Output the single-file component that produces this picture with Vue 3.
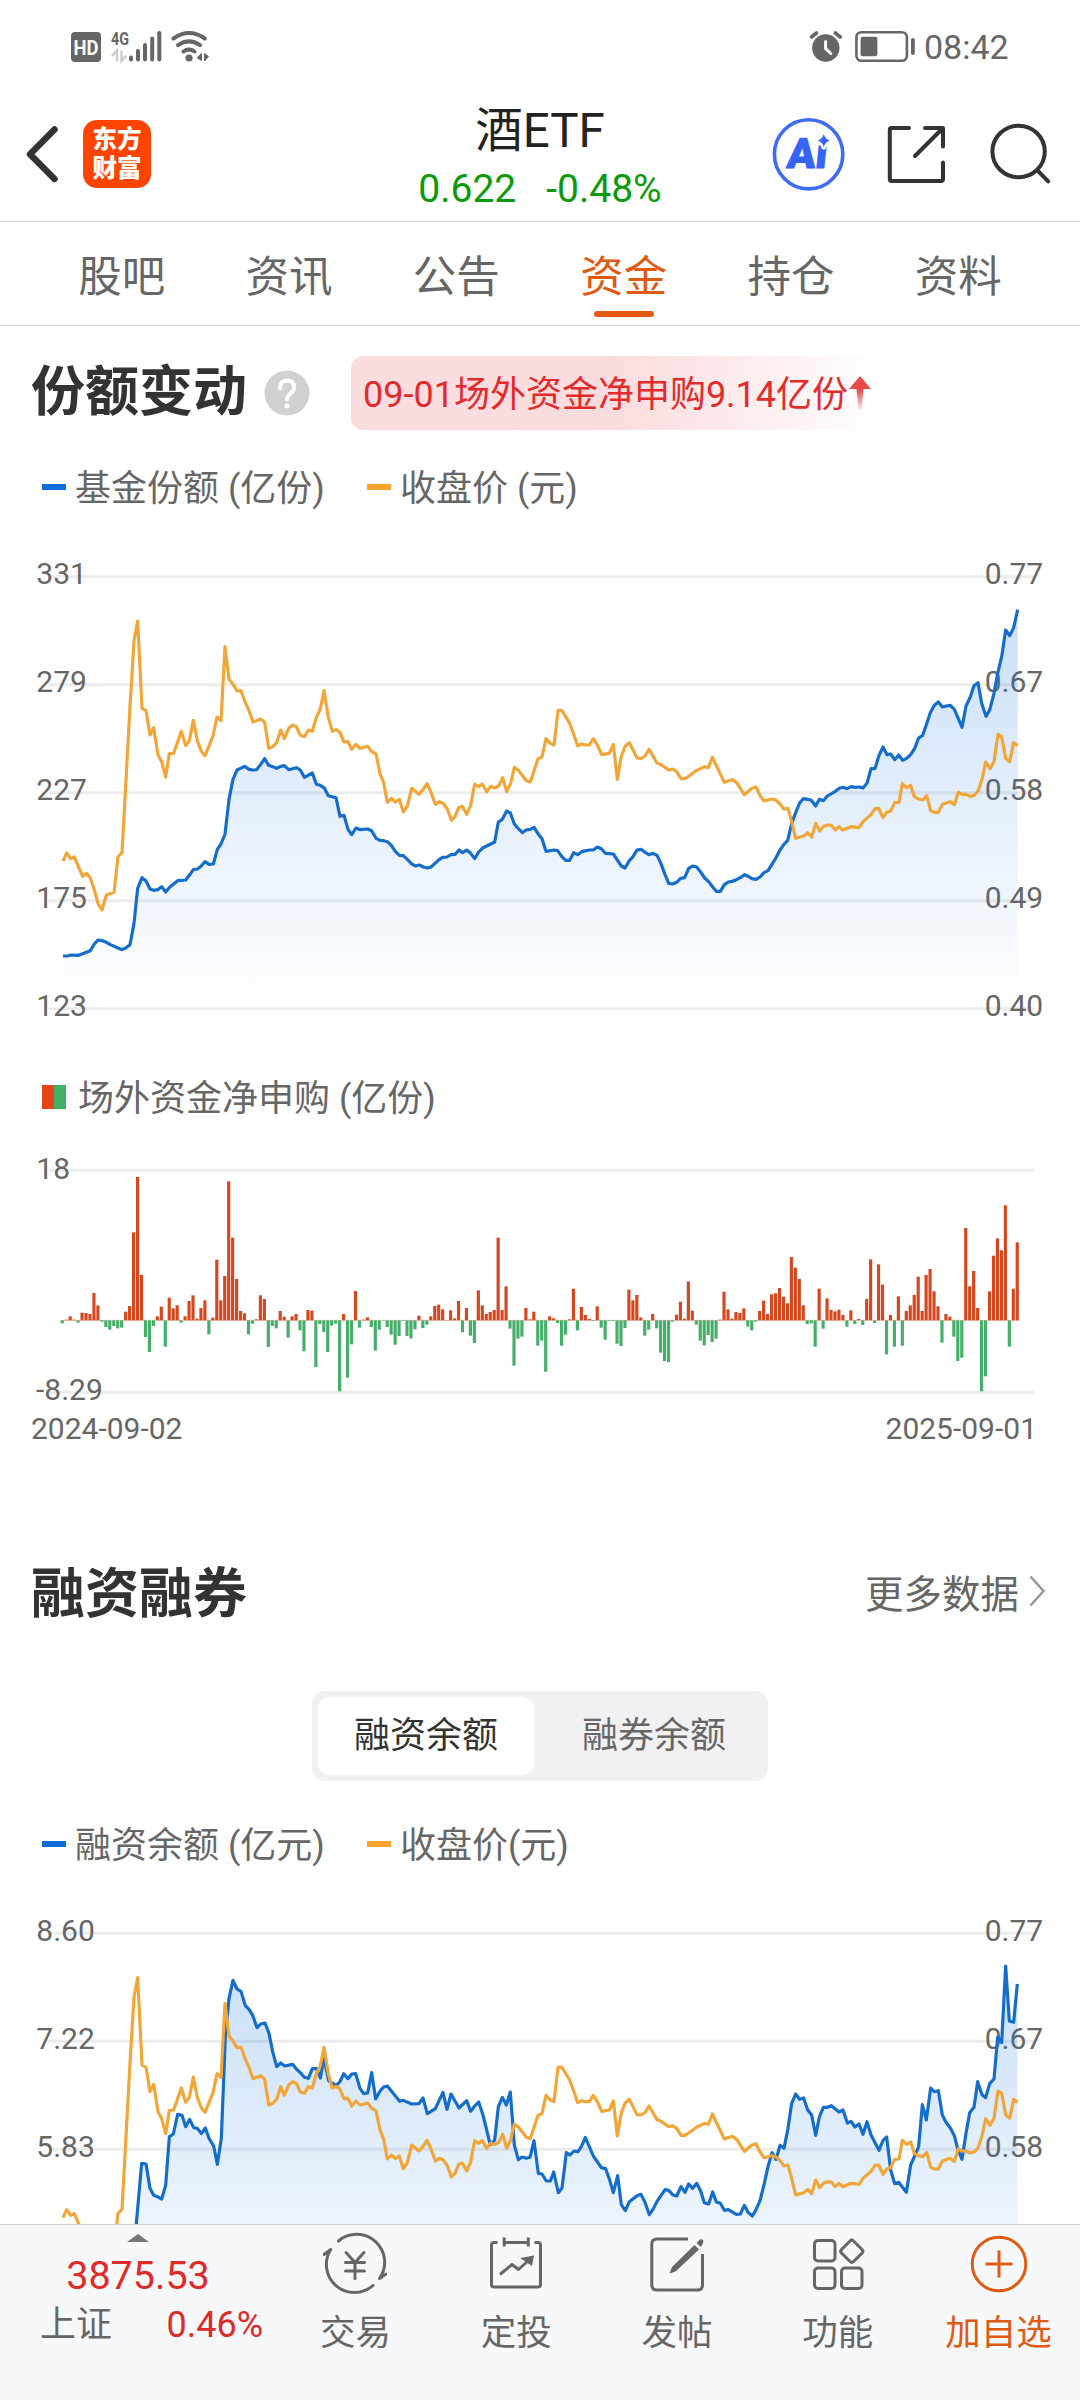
<script setup>
import { ref } from 'vue'

const tabs = ['股吧', '资讯', '公告', '资金', '持仓', '资料']
const activeTab = ref(3)
const activeSeg = ref(0)

// 图表坐标: 1px = 3 个单位, 每段数据带自己的横向偏移
const toPairs = (parts, kx = 1, dy = 0) =>
  parts.flatMap(({ from, pts }) =>
    pts.split(' ').map((p) => {
      const [x, y] = p.split(',').map(Number)
      return [Math.round((x + from) * kx), y + dy]
    })
  )
const toLine = (pairs) => pairs.map((p) => p.join(',')).join(' ')
const toArea = (pairs, bottom) =>
  `${pairs[0][0]},${bottom} ${toLine(pairs)} ${pairs[pairs.length - 1][0]},${bottom}`

// 收盘价
const priceData = [
  { from: 0, pts: '189,963 200,939 212,956 223,951 248,1009 260,1000 271,1014 283,1050 295,1093 306,1110 319,1065 342,1057 354,950 366,938 378,720 390,500 402,302 413,243 426,505 438,512 450,585 461,563 474,645 485,665 497,711 508,641 521,640 544,574 557,617 568,602 580,541 592,602 604,634 615,647 639,588 651,531 663,542 675,320 687,418 700,434 711,453 723,452 735,485 747,512 759,546 782,537 794,547 806,625 818,620 830,608 842,570 853,596 866,565 878,555 889,560 901,586 913,590 925,570 937,574 949,532 961,507 972,452 985,532 997,574 1008,569 1019,576 1032,606 1044,605 1055,628 1068,613 1080,625 1103,619 1115,635 1128,642 1140,700 1151,728' },
  { from: 1080, pts: '82,787 94,775 106,786 118,778 130,816 142,798 155,745 177,763 190,748 201,731 213,757 226,793 238,785 249,789 262,807 274,841 285,830 296,803 307,799 320,823 332,796 344,732 355,740 367,732 380,755 392,739 404,744 416,738 428,713 440,755 452,730 463,682 475,691 499,722 511,726 534,656 546,651 558,596 571,610 582,615 594,512 605,511 617,530 629,550 641,583 653,618 665,612 676,615 688,615 700,596 713,617 725,644 748,640 760,613 772,718 784,648 796,618 808,608 831,654 843,655 855,648 867,628 891,669 903,674 926,690 938,687 950,695 963,716 974,716 986,709 1010,691 1034,680 1045,683' },
  { from: 2100, pts: '37,652 73,727 97,719 110,728 133,764 156,745 168,741 180,766 192,783 215,777 227,780 240,792 252,808 264,805 275,845 287,895 312,888 323,878 335,891 347,850 359,873 371,859 383,855 394,856 406,870 417,860 429,870 453,860 477,863 489,845 513,824 525,806 536,805 549,833 560,817 572,813 584,788 597,787 607,731 620,743 632,736 643,770 655,777 668,780 680,767 692,812 703,817 715,817 727,793 750,785 763,794 775,756 786,763 798,763 810,769 823,766 834,753 846,718 857,666 870,686 882,665 894,583 905,590 917,655 929,665 941,608 953,617' }
]

// 基金份额
const shareData = [
  { from: 0, pts: '189,1248 202,1248 213,1245 236,1246 271,1232 283,1212 294,1200 307,1202 319,1207 331,1214 354,1224 366,1229 377,1224 390,1214 402,1150 413,1045 426,1013 438,1023 450,1047 461,1051 473,1049 485,1040 497,1056 509,1042 533,1022 557,1020 568,1006 580,989 592,987 603,979 615,965 627,973 640,972 652,928 663,912 675,882 687,778 699,718 711,690 734,679 747,688 759,690 770,689 782,673 794,656 806,676 830,685 842,679 853,677 866,689 889,683 901,690 913,712 937,699 949,733 961,736 973,744 985,767 1008,773 1020,829 1032,826 1044,868 1055,884 1068,864 1080,869 1103,867 1115,872 1128,895 1140,901 1151,902' },
  { from: 1080, pts: '82,905 94,916 106,934 118,946 130,947 143,959 154,971 166,978 178,975 190,981 202,984 213,981 225,970 237,959 248,952 261,951 273,944 285,943 297,930 308,938 320,930 332,940 344,956 356,936 368,924 380,918 404,906 415,846 427,838 440,813 451,819 463,852 475,866 487,878 498,870 511,868 522,862 534,881 546,896 558,934 582,930 593,932 605,949 617,961 629,961 641,938 653,944 665,935 688,930 700,930 712,921 724,926 736,940 760,942 784,978 795,984 808,962 819,950 831,930 843,928 855,937 867,944 879,940 891,946 903,971 914,1001 926,1030 938,1032 950,1027 962,1015 974,1013 986,985 998,978 1010,981 1022,996 1034,1014 1046,1025 1058,1041 1069,1054 1081,1054' },
  { from: 2100, pts: '73,1034 85,1026 97,1024 109,1019 121,1013 133,1004 145,1009 156,1016 168,1018 180,1011 192,998 204,992 227,955 239,932 251,914 263,901 275,850 287,818 299,789 310,776 322,778 334,781 347,798 358,778 370,782 382,768 406,754 418,745 430,742 441,746 453,740 466,742 478,741 489,744 501,730 513,686 525,686 537,646 549,621 561,644 572,642 584,659 596,645 608,661 620,655 632,644 644,625 656,594 668,586 679,554 691,518 703,496 715,486 727,501 739,498 751,496 763,508 775,536 786,562 798,498 810,473 822,437 834,428 845,490 858,529 869,510 882,460 893,400 905,350 917,270 929,287 941,263 953,209' }
]

// 融资余额
const marginData = [
  { from: 0, pts: '183,1320 300,1330 385,1180 396,1000 411,820 424,822 436,895 446,916 457,920 469,927 481,886 492,740 503,732 516,673 528,676 539,710 551,688 562,713 573,715 585,731 596,714 607,745 620,768 631,823 643,745 654,440 665,325 677,271 688,297 700,304 712,347 723,358 734,376 746,413 757,402 769,399 781,430 792,485 803,530 815,519 827,528 850,523 862,539 873,549 884,562 895,565 907,536 919,536 930,564 941,505 954,572 976,587 987,575 998,551 1010,566 1021,552 1033,551 1045,595 1056,611 1068,609 1079,548 1091,627 1103,603 1114,591 1125,588 1160,634 1171,631 1195,642 1217,641 1228,624 1241,671 1264,656 1286,607 1298,658 1310,612 1333,654 1355,632 1367,664 1378,648 1390,636 1402,675 1424,765 1436,750 1447,650 1459,622 1470,645 1482,606 1493,765 1505,809 1516,801 1528,805 1539,802 1551,752 1563,850' },
  { from: 1568, pts: '6,852 18,873 30,873 40,846 53,908 64,894 76,788 87,795 99,783 110,785 120,770 132,742 155,798 178,833 191,836 202,870 213,908 225,857 236,944 248,962 259,935 282,917 293,913 305,937 317,974 328,958 340,934 363,899 374,901 386,915 397,918 409,890 421,907 432,882 443,895 455,880 466,903 477,938 490,942 501,906 512,936 524,940 535,961 547,959 570,973 582,972 593,946 604,967 616,978 627,959 639,932 651,880 662,830 674,788 685,808 697,766 708,775 720,715 731,640 742,612 754,628 766,624 777,660 789,675 800,736 811,681 823,652 834,652 846,647 868,666 880,660 892,699 903,694 915,711 926,702 938,733 949,695 961,735 984,781 996,751 1007,741 1018,840 1030,881 1041,877 1064,907 1076,825 1099,770 1110,644 1122,690 1134,594 1145,605 1157,602 1168,675 1179,697 1191,714 1203,737 1214,780 1225,808 1237,730 1248,668 1260,652 1271,575 1283,614 1294,623 1306,581 1318,567 1329,442 1340,458 1352,228 1363,393 1375,397 1386,282' }
]

const price = toPairs(priceData)
const share = toPairs(shareData)
const margin = toPairs(marginData, 1.0332)

const charts = {
  share: {
    top: 110,
    left: ['331', '279', '227', '175', '123'],
    right: ['0.77', '0.67', '0.58', '0.49', '0.40'],
    main: toLine(share),
    area: toArea(share, 1405),
    price: toLine(price)
  },
  margin: {
    top: 130,
    left: ['8.60', '7.22', '5.83'],
    right: ['0.77', '0.67', '0.58'],
    main: toLine(margin),
    area: toArea(margin, 1425),
    price: toLine(toPairs(priceData, 1, 20))
  }
}

// 场外资金净申购, 每个交易日一根柱子
const flow = [
  -9, 2, 12, 2, -7, 23, 22, 19, 82, 45, -4, -20, -28, -17, -24, -22, 26, 43, 264, 430,
  136, -50, -95, -17, 12, 41, -79, 68, 36, 45, -7, 12, 58, 75, 5, 37, 60, -42, 8, 182,
  60, 133, 417, 248, 124, 28, 21, -42, -10, 3, 75, 64, -80, -17, -24, 28, 11, -52, 12, 19,
  -30, -93, 31, 29, -140, -11, -35, -95, -16, -10, -213, 19, -172, -72, 88, -22, 2, 9, -20, -91,
  -28, -1, -20, -43, -73, -47, -2, -47, -54, -27, 14, -23, -13, 12, 43, 47, 33, -1, 30, 6,
  58, -36, 37, -46, -68, 90, 45, 19, 25, 31, 248, 31, 102, -25, -136, -55, -49, 37, 3, 26,
  -76, -61, -154, 12, 6, -8, -76, -43, 3, 95, -30, 40, 16, 4, -2, 42, -22, -58, -2, -2,
  -70, -77, -23, 92, 60, 76, 9, -46, -28, 19, -24, -97, -122, -125, -4, 17, 56, 5, 117, 29,
  -13, -61, -75, -44, -65, -55, 2, 86, 33, 5, 25, 22, 36, -19, -30, -4, 28, 59, 19, 78,
  81, 97, 71, 51, 190, 158, 124, 45, -11, -9, -79, 95, -25, 66, 31, 27, 32, 16, -19, 30,
  -11, 4, -14, 64, 183, -8, 168, 107, -102, 16, -79, 72, -76, 28, 45, 76, 131, 28, 136, 154,
  87, 42, -67, 19, 11, -49, -122, -112, 277, 102, 148, 37, -213, -168, 87, 194, 246, 210, 345, -79,
  95, 234
]
const bars = flow.map((v, i) => ({
  x: 182 + i * 11.888,
  y: v > 0 ? 781 - v : 781,
  h: Math.abs(v),
  color: v > 0 ? '#d5481f' : '#45ae69'
}))
</script>

<template>
  <div class="page">
    <div class="status-bar">
      <svg class="status-left" width="150" height="40" viewBox="66 26 150 40">
        <rect x="71" y="32" width="30" height="30" rx="4" fill="#666" />
        <text x="73.5" y="54.5" class="hd" textLength="25" lengthAdjust="spacingAndGlyphs">HD</text>
        <text x="111" y="44.5" class="g4" textLength="18" lengthAdjust="spacingAndGlyphs">4G</text>
        <path d="M112 56 L117 50.5 V61 M121.5 50.5 V61 L126.5 55.5" fill="none" stroke="#ccc" stroke-width="2.4" />
        <g stroke="#666" stroke-width="4" stroke-linecap="round">
          <path d="M131 57.5 V59.5" />
          <path d="M138 51 V59.5" />
          <path d="M145 45 V59.5" />
          <path d="M152.2 38.5 V59.5" />
          <path d="M159.3 33 V59.5" />
        </g>
        <g fill="none" stroke="#666" stroke-width="4" stroke-linecap="round">
          <path d="M173.5 38.5 Q189 27.5 204.8 38.5" />
          <path d="M178 45.2 Q189 37.5 200 45.2" />
          <path d="M183.5 51.5 Q189 47.5 194.5 51.5" />
        </g>
        <circle cx="189" cy="58" r="3.6" fill="#666" />
        <path d="M197 58 L201.5 53.5 V61 M204.5 53.5 V61 L208.5 56.5 Z" fill="#666" stroke="#666" stroke-linejoin="round" />
      </svg>
      <svg class="status-right" width="112" height="40" viewBox="806 26 112 40">
        <circle cx="825.8" cy="48" r="13.7" fill="#666" />
        <path d="M811.5 37 L816.5 33 M840.3 37 L835.3 33" stroke="#666" stroke-width="3.6" stroke-linecap="round" />
        <path d="M825.6 41.5 V48.5 L830.8 53.5" fill="none" stroke="#fff" stroke-width="3" stroke-linecap="round" />
        <rect x="856.4" y="32.2" width="50.5" height="28.6" rx="5" fill="none" stroke="#666" stroke-width="2.6" />
        <rect x="860.6" y="36.7" width="16.8" height="19.6" rx="2" fill="#666" />
        <rect x="911" y="38" width="3.8" height="17" rx="1.9" fill="#666" />
      </svg>
      <span class="time">08:42</span>
    </div>

    <div class="nav-bar">
      <div class="nav-side">
        <svg width="34" height="60" viewBox="26 124 34 60">
          <path d="M54.5 129.5 L30 154.3 L54.5 179" fill="none" stroke="#333" stroke-width="6.5" stroke-linecap="round" stroke-linejoin="round" />
        </svg>
        <div class="logo">
          <span>东方</span>
          <span>财富</span>
        </div>
      </div>
      <div class="nav-title">
        <div class="name">酒ETF</div>
        <div class="quote"><span>0.622</span><span>-0.48%</span></div>
      </div>
      <div class="nav-side right">
        <svg width="290" height="80" viewBox="765 114 290 80">
          <ellipse cx="808.6" cy="154.3" rx="34.2" ry="34.6" fill="none" stroke="#3e6cf2" stroke-width="3.6" />
          <text transform="translate(786 167.5) skewX(-6)" class="ai" textLength="40" lengthAdjust="spacingAndGlyphs">Ai</text>
          <path d="M823.8 134 Q825 139 829.8 140.5 Q825 142 823.8 147 Q822.5 142 817.8 140.5 Q822.5 139 823.8 134 Z" fill="#3464f8" stroke="#fff" stroke-width="5" stroke-linejoin="round" paint-order="stroke" />
          <g fill="none" stroke="#333" stroke-width="4" stroke-linecap="round" stroke-linejoin="round">
            <path d="M909 128 H891.5 Q889.8 128 889.8 130 V179 Q889.8 181 891.5 181 H941 Q943 181 943 179 V162.5" />
            <path d="M925 128 H943 V146.5 M942 129 L915 156" />
            <ellipse cx="1018.6" cy="151.5" rx="26.2" ry="25.8" />
            <path d="M1037.5 170.5 L1048.2 181.3" />
          </g>
        </svg>
      </div>
    </div>

    <div class="tabs">
      <div v-for="(tab, idx) in tabs" :key="tab" class="tab" :class="{ active: idx === activeTab }" @click="activeTab = idx">
        {{ tab }}
      </div>
    </div>

    <div class="content">
      <div class="section-head">
        <h2>份额变动</h2>
        <svg class="help" width="46" height="46" viewBox="0 0 46 46">
          <circle cx="23" cy="23" r="22.5" fill="#d1d1d3" />
          <path d="M16 18.5 Q16 10.5 23 10.5 Q30 10.5 30 17.5 Q30 21 26.5 23.5 Q23 26 23 29.5" fill="none" stroke="#fff" stroke-width="4" stroke-linecap="round" />
          <circle cx="23" cy="36" r="2.5" fill="#fff" />
        </svg>
        <div class="notice">
          <span>09-01场外资金净申购9.14亿份</span>
          <svg width="22" height="34" viewBox="0 0 22 34">
            <defs>
              <linearGradient id="arrowFade" x1="0" y1="0" x2="0" y2="34" gradientUnits="userSpaceOnUse">
                <stop offset="0.4" stop-color="#e94a4a" />
                <stop offset="1" stop-color="#e94a4a" stop-opacity="0.1" />
              </linearGradient>
            </defs>
            <path d="M11 0 L22 13 H14.5 L12.5 33 H9.5 L7.5 13 H0 Z" fill="url(#arrowFade)" />
          </svg>
        </div>
      </div>

      <div class="legend">
        <i class="dash blue"></i><span class="first">基金份额 (亿份)</span>
        <i class="dash orange"></i><span>收盘价 (元)</span>
      </div>

      <svg class="chart first-chart" width="1080" height="480" viewBox="0 0 3240 1440">
        <defs>
          <linearGradient id="fill-share" x1="0" y1="0" x2="0" y2="1">
            <stop offset="0" stop-color="#0f6fe0" stop-opacity="0.22" />
            <stop offset="1" stop-color="#0f6fe0" stop-opacity="0" />
          </linearGradient>
        </defs>
        <g v-for="(label, i) in charts.share.left" :key="label">
          <path :d="`M145 ${charts.share.top + i * 324} H3102`" class="grid" />
          <text x="109" :y="charts.share.top + 21 + i * 324" class="axis">{{ label }}</text>
          <text x="2954" :y="charts.share.top + 21 + i * 324" class="axis">{{ charts.share.right[i] }}</text>
        </g>
        <polygon :points="charts.share.area" fill="url(#fill-share)" />
        <polyline :points="charts.share.main" class="line blue-line" />
        <polyline :points="charts.share.price" class="line orange-line" />
      </svg>

      <div class="legend bar-legend">
        <i class="block"></i><span>场外资金净申购 (亿份)</span>
      </div>

      <svg class="chart" width="1080" height="285" viewBox="0 195 3240 855">
        <path d="M145 331 H3102 M145 997 H3102" class="grid" />
        <text x="109" y="356" class="axis">18</text>
        <text x="108" y="1019" class="axis">-8.29</text>
        <path d="M182 781 H3058" stroke="#eba58e" stroke-width="2" />
        <rect v-for="(bar, i) in bars" :key="i" :x="bar.x" :y="bar.y" width="9.5" :height="bar.h" :fill="bar.color" />
      </svg>
      <div class="dates"><span>2024-09-02</span><span>2025-09-01</span></div>

      <div class="section-head second">
        <h2>融资融券</h2>
        <div class="more">
          更多数据
          <svg width="17" height="32" viewBox="0 0 17 32">
            <path d="M1.5 1.5 L14.5 16 L1.5 30.5" fill="none" stroke="#999" stroke-width="2.6" />
          </svg>
        </div>
      </div>

      <div class="segment">
        <div class="seg-item" :class="{ on: activeSeg === 0 }" @click="activeSeg = 0">融资余额</div>
        <div class="seg-item" :class="{ on: activeSeg === 1 }" @click="activeSeg = 1">融券余额</div>
      </div>

      <div class="legend">
        <i class="dash blue"></i><span class="first">融资余额 (亿元)</span>
        <i class="dash orange"></i><span>收盘价(元)</span>
      </div>

      <svg class="chart margin-chart" width="1080" height="480" viewBox="0 0 3240 1440">
        <defs>
          <linearGradient id="fill-margin" x1="0" y1="0" x2="0" y2="1">
            <stop offset="0" stop-color="#0f6fe0" stop-opacity="0.22" />
            <stop offset="1" stop-color="#0f6fe0" stop-opacity="0" />
          </linearGradient>
        </defs>
        <g v-for="(label, i) in charts.margin.left" :key="label">
          <path :d="`M145 ${charts.margin.top + i * 324} H3102`" class="grid" />
          <text x="109" :y="charts.margin.top + 22 + i * 324" class="axis">{{ label }}</text>
          <text x="2954" :y="charts.margin.top + 22 + i * 324" class="axis">{{ charts.margin.right[i] }}</text>
        </g>
        <polygon :points="charts.margin.area" fill="url(#fill-margin)" />
        <polyline :points="charts.margin.main" class="line blue-line" />
        <polyline :points="charts.margin.price" class="line orange-line" />
      </svg>
    </div>

    <div class="bottom-bar">
      <div class="index-info">
        <svg class="caret" width="22" height="8" viewBox="0 0 22 8"><path d="M0 8 L11 0 L22 8 Z" fill="#777" /></svg>
        <div class="index-value">3875.53</div>
        <div class="index-row"><span class="index-name">上证</span><span class="index-rate">0.46%</span></div>
      </div>
      <div class="action">
        <svg width="64" height="64" viewBox="0 0 64 64">
          <g fill="none" stroke="#666" stroke-width="3" stroke-linecap="round" stroke-linejoin="round">
            <path d="M15.5 9 A28 28 0 0 1 56.5 46.5 L63 42" />
            <path d="M50 53.5 A28 28 0 0 1 7.8 17.5 L1 22.5" />
            <path d="M23 20.5 L32 30.5 L41 20.5 M32 30.5 V46.5 M22.5 30.5 H41.5 M22.5 39 H41.5" />
          </g>
        </svg>
        <span>交易</span>
      </div>
      <div class="action">
        <svg width="64" height="64" viewBox="0 0 64 64">
          <g fill="none" stroke="#666" stroke-width="3" stroke-linejoin="round">
            <path d="M13.5 10.5 H10 Q7.5 10.5 7.5 13 V52.5 Q7.5 55 10 55 H54 Q56.5 55 56.5 52.5 V13 Q56.5 10.5 54 10.5 H50.5" />
            <path d="M20.2 5.5 V14.5 M44.3 5.5 V14.5 M20.2 10.5 H44.3" />
            <path d="M16 42.5 L28 32.5 L34.5 37.5 L45 28" />
          </g>
          <path d="M36 26 L50 23.5 L48 34 Z" fill="#666" />
        </svg>
        <span>定投</span>
      </div>
      <div class="action">
        <svg width="64" height="64" viewBox="0 0 64 64">
          <path d="M43 7 H12 Q6.8 7 6.8 12 V53 Q6.8 58 12 58 H52.5 Q57.5 58 57.5 53 V22" fill="none" stroke="#666" stroke-width="3" />
          <path d="M24.5 41.5 L27 35 L49.5 13 L54 17.5 L30.5 39.5 Z" fill="#666" />
          <path d="M51.5 11 L55 7.5 Q57.5 6.5 58.5 9 Q58.5 11 55.8 15 Z" fill="#666" />
        </svg>
        <span>发帖</span>
      </div>
      <div class="action">
        <svg width="64" height="64" viewBox="0 0 64 64">
          <g fill="none" stroke="#666" stroke-width="3">
            <rect x="8.5" y="8.5" width="20.5" height="20.5" rx="3.5" />
            <rect x="8.5" y="36" width="20.5" height="20.5" rx="3.5" />
            <rect x="35.5" y="36" width="20.5" height="20.5" rx="3.5" />
            <rect x="37.3" y="10.8" width="17" height="17" rx="2.5" transform="rotate(45 45.8 19.3)" />
          </g>
        </svg>
        <span>功能</span>
      </div>
      <div class="action add">
        <svg width="64" height="64" viewBox="0 0 64 64">
          <circle cx="32" cy="32" r="26.8" fill="none" stroke="#df5a12" stroke-width="3" />
          <path d="M32 18.5 V45.5 M18.5 32 H45.5" stroke="#df5a12" stroke-width="3" />
        </svg>
        <span>加自选</span>
      </div>
    </div>
  </div>
</template>

<style>
body {
  margin: 0;
  background: #fff;
}
</style>

<style scoped>
.page {
  display: flex;
  flex-direction: column;
  width: 1080px;
  height: 2400px;
  overflow: hidden;
  background: #fff;
  color: #666;
  font-family: Roboto, "Noto Sans CJK SC", sans-serif;
}
.page svg {
  flex-shrink: 0;
}

/* 状态栏 */
.status-bar {
  display: flex;
  align-items: center;
  flex-shrink: 0;
  height: 92px;
  padding: 0 66px;
  box-sizing: border-box;
}
.status-right {
  margin-left: auto;
}
.time {
  width: 96px;
  padding: 2px 0 0 6px;
  box-sizing: border-box;
  font-size: 34px;
  line-height: 40px;
}
.hd {
  font-size: 20px;
  font-weight: 700;
  fill: #fff;
}
.g4 {
  font-size: 18px;
  font-weight: 700;
  fill: #666;
}

/* 导航栏 */
.nav-bar {
  display: grid;
  grid-template-columns: 1fr 300px 1fr;
  flex-shrink: 0;
  height: 130px;
  box-sizing: border-box;
  border-bottom: 1px solid #d4d4d6;
}
.nav-side {
  display: flex;
  align-items: center;
  gap: 23px;
  padding: 0 0 5px 26px;
}
.nav-side.right {
  justify-content: flex-end;
  padding: 0 25px 5px 0;
}
.logo {
  display: flex;
  flex-direction: column;
  align-items: center;
  justify-content: center;
  width: 68px;
  height: 68px;
  border-radius: 14px;
  background: #ff4400;
  color: #fff;
  font-size: 24.5px;
  font-weight: 900;
  line-height: 29px;
}
.ai {
  font-size: 42px;
  font-weight: 900;
  fill: #3464f8;
  stroke: #3464f8;
  stroke-width: 1;
}
.nav-title {
  display: flex;
  flex-direction: column;
  align-items: center;
  padding-top: 9px;
}
.name {
  color: #222;
  font-size: 47.5px;
  line-height: 60px;
}
.quote {
  display: flex;
  gap: 30px;
  color: #0a9a0a;
  font-size: 39px;
  line-height: 56px;
}

/* 频道切换 */
.tabs {
  display: flex;
  flex-shrink: 0;
  height: 104px;
  padding: 0 38px;
  box-sizing: border-box;
  border-bottom: 1px solid #d4d4d6;
}
.tab {
  display: flex;
  flex: 1;
  flex-direction: column;
  align-items: center;
  padding-top: 25px;
  font-size: 43.5px;
  line-height: 62px;
  white-space: nowrap;

  &.active {
    color: #df5a12;
  }
  &.active::after {
    content: '';
    width: 60px;
    height: 6px;
    margin-top: 2px;
    border-radius: 3px;
    background: #e2590f;
  }
}

/* 内容 */
.content {
  flex: 1;
  min-height: 0;
  overflow: hidden;
}
.section-head {
  display: flex;
  align-items: center;
  height: 134px;
  padding: 0 34px 0 31px;

  h2 {
    margin: 0;
    color: #333;
    font-size: 54px;
    font-weight: 700;
    line-height: 72px;
  }
}
.section-head.second {
  margin-top: 78px;

  h2 {
    margin: 7px 0 0;
  }
}
.help {
  margin-left: 17px;
}
.notice {
  display: flex;
  align-items: center;
  gap: 1px;
  height: 74px;
  margin-left: 41px;
  padding: 0 14px 0 12px;
  border-radius: 12px;
  background: linear-gradient(90deg, #fbdde0 0%, #fbdcde 50%, #fff 100%);
  color: #e22b2b;
  font-size: 36px;

  span {
    margin-bottom: 5px;
  }
}
.legend {
  display: flex;
  align-items: center;
  height: 54px;
  padding-left: 42px;
  font-size: 36px;
  line-height: 54px;
  white-space: pre;

  span {
    padding-top: 3px;
  }
  .dash {
    width: 24px;
    height: 6px;
    margin-right: 9px;
  }
  .blue {
    background: #0f6fd8;
  }
  .orange {
    background: #f8a42c;
  }
  .first {
    width: 292px;
  }
  .block {
    width: 24px;
    height: 24px;
    margin-right: 12px;
    background: linear-gradient(90deg, #e34419 50%, #3fb065 50%);
  }
}
.bar-legend {
  margin-top: 50px;
  margin-bottom: 1px;
}
.chart {
  display: block;
  overflow: visible;
}
.first-chart {
  margin-top: 26px;
}
.margin-chart {
  margin-top: 19px;
}
.grid {
  fill: none;
  stroke: #ececec;
  stroke-width: 9;
}
.axis {
  fill: #666;
  font-size: 90px;
}
.line {
  fill: none;
  stroke-width: 9.5;
  stroke-linejoin: round;
}
.blue-line {
  stroke: #146dcb;
}
.orange-line {
  stroke: #f1a637;
}
.dates {
  display: flex;
  justify-content: space-between;
  height: 36px;
  padding: 0 43px 0 31px;
  font-size: 30px;
  line-height: 37px;
}
.more {
  display: flex;
  align-items: center;
  gap: 10px;
  margin-left: auto;
  font-size: 38.5px;
}
.segment {
  display: flex;
  width: 456px;
  height: 90px;
  margin: 33px auto 36px;
  padding: 6px;
  box-sizing: border-box;
  border-radius: 12px;
  background: #f1f1f4;
}
.seg-item {
  flex: 0 0 216px;
  border-radius: 12px;
  font-size: 36px;
  line-height: 79px;
  text-align: center;

  &:last-child {
    flex: 1;
    padding-left: 12px;
  }
  &.on {
    background: #fff;
    color: #333;
  }
}

/* 底部栏 */
.bottom-bar {
  display: flex;
  flex-shrink: 0;
  height: 176px;
  box-sizing: border-box;
  border-top: 1px solid #d0d2d6;
  background: #f7f8fa;
}
.index-info {
  display: flex;
  flex-direction: column;
  align-items: center;
  width: 276px;
}
.caret {
  margin-top: 9px;
}
.index-value {
  margin-top: 10px;
  color: #e02a2a;
  font-size: 39.5px;
  line-height: 48px;
}
.index-row {
  display: flex;
  align-self: stretch;
  justify-content: space-between;
  padding: 1px 13px 0 40px;
  font-size: 36px;
  line-height: 48px;
}
.index-rate {
  color: #e02a2a;
}
.action {
  display: flex;
  flex: 0 0 160.8px;
  flex-direction: column;
  align-items: center;
  margin-left: -1px;
  margin-right: 1px;
  padding-top: 7px;
  font-size: 35.5px;
  line-height: 52px;
  white-space: nowrap;

  span {
    margin-top: 11px;
  }
}
.add {
  color: #df5a12;
}
</style>
